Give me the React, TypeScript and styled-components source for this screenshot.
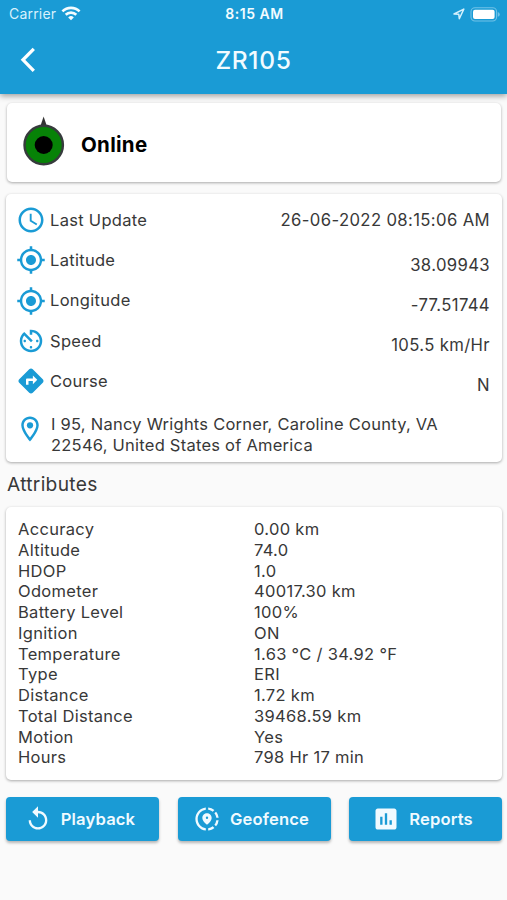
import React from "react";
import styled, { createGlobalStyle } from "styled-components";
import {
  MdAccessTime,
  MdGpsFixed,
  MdAvTimer,
  MdDirections,
  MdOutlineLocationOn,
  MdReplay,
  MdShareLocation,
  MdAssessment,
} from "react-icons/md";

const blue = "#1a9bd5";

const GlobalStyle = createGlobalStyle`
  * { box-sizing: border-box; }
  body {
    margin: 0;
    background: #fafafa;
    color: #383838;
    font-family: Inter, "Liberation Sans", sans-serif;
    font-size: 16.5px;
    line-height: 20.76px;
    letter-spacing: 0.3px;
    white-space: nowrap;
  }
  svg { display: block; flex: none; }
`;

const Screen = styled.main`
  width: 507px;
  height: 900px;
  display: flex;
  flex-direction: column;
  overflow: hidden;
`;

const Header = styled.header`
  height: 94px;
  flex: none;
  background: ${blue};
  color: #f2fbff;
  box-shadow: 0 2px 6px rgba(0, 0, 0, 0.38);
`;

const StatusBar = styled.div`
  height: 27px;
  padding: 1px 7px 0 9px;
  display: grid;
  grid-template-columns: 1fr auto 1fr;
  align-items: center;
  font-size: 14px;
  letter-spacing: 0.2px;
`;

const StatusGroup = styled.div<{ $end?: boolean }>`
  display: flex;
  align-items: center;
  gap: 5px;
  justify-content: ${({ $end }) => ($end ? "flex-end" : "flex-start")};
  color: #d8f1fc;
`;

const Clock = styled.span`
  font-size: 14px;
  font-weight: 600;
  letter-spacing: 0.5px;
`;

const TitleBar = styled.div`
  height: 66px;
  padding: 0 20px;
  display: grid;
  grid-template-columns: 1fr auto 1fr;
  align-items: center;
`;

const Title = styled.h1`
  margin: 0;
  font-size: 24.5px;
  line-height: 30px;
  font-weight: 500;
  letter-spacing: 0.7px;
`;

const Card = styled.section`
  flex: none;
  margin: 0 5px 0 6px;
  background: #fff;
  border-radius: 5px;
  box-shadow: 0 1px 3px rgba(0, 0, 0, 0.33);
`;

const OnlineCard = styled(Card)`
  height: 79px;
  margin: 9px 6px 0 7px;
  padding: 5px 16px 0;
  display: flex;
  align-items: center;
  gap: 16px;
`;

const OnlineLabel = styled.strong`
  color: #000;
  font-size: 20.5px;
  font-weight: 650;
  letter-spacing: 0.3px;
`;

const DetailsCard = styled(Card)`
  height: 268px;
  margin-top: 12px;
  padding: 6px 12px 0 9.5px;
`;

const DetailRow = styled.div`
  height: 40.3px;
  display: flex;
  align-items: center;
  color: ${blue};
`;

const DetailLabel = styled.span`
  margin-left: 4.5px;
  color: #383838;
`;

const DetailValue = styled.span<{ $low?: boolean }>`
  margin-left: auto;
  padding-top: ${({ $low }) => ($low ? "9px" : "0")};
  color: #383838;
  font-size: 16.7px;
  letter-spacing: 0.36px;
`;

const AddressRow = styled.div`
  padding: 12.5px 0 0 0;
  display: flex;
  align-items: flex-start;
  gap: 6.5px;
  color: ${blue};
  letter-spacing: 0.24px;

  svg { margin-left: -1px; }
`;

const Address = styled.p`
  margin: 0;
  color: #383838;
`;

const SectionTitle = styled.h2`
  margin: 11px 0 0 7px;
  font-size: 19.2px;
  line-height: 22px;
  font-weight: 400;
  letter-spacing: 0.3px;
`;

const AttributesCard = styled(Card)`
  height: 273px;
  margin-top: 12px;
  padding: 12px 12px 0;
`;

const AttributeRow = styled.div`
  display: grid;
  grid-template-columns: 236px 1fr;
`;

const Actions = styled.div`
  margin: 17px 5px 0 6px;
  display: flex;
  justify-content: space-between;
`;

const ActionButton = styled.button`
  width: 153px;
  height: 44px;
  padding: 0 6px 0 0;
  display: flex;
  align-items: center;
  justify-content: center;
  gap: 9px;
  border: 0;
  border-radius: 4px;
  background: ${blue};
  box-shadow: 0 2px 3px rgba(0, 0, 0, 0.28);
  color: #f0faff;
  font: 600 16.6px/22px Inter, sans-serif;
  letter-spacing: 0.15px;
`;

const WifiIcon = () => (
  <svg width="20" height="15" viewBox="0 0 20 15" fill="none" stroke="#f4fcff" strokeWidth="2.6">
    <path d="M1.4 5.4a12.3 12.3 0 0 1 17.2 0M4.7 8.8a7.6 7.6 0 0 1 10.6 0" />
    <path d="M7.2 11.4a4 4 0 0 1 5.6 0L10 14.3z" fill="#f4fcff" stroke="none" />
  </svg>
);

const LocationArrow = () => (
  <svg width="12" height="12" viewBox="0 0 12 12" fill="none" stroke="#d4f0fc" strokeWidth="1.5" strokeLinejoin="round">
    <path d="M1 6 10.8 1.1 6.3 10.7 5.8 6.3z" />
  </svg>
);

const BatteryIcon = () => (
  <svg width="30" height="15" viewBox="0 0 30 15">
    <rect x="1" y=".8" width="25.6" height="13.2" rx="4" fill="none" stroke="#71c2e7" strokeWidth="1.1" />
    <rect x="3" y="2.8" width="21.6" height="9.2" rx="2" fill="#fff" />
    <path d="M27.8 5q2 .8 2 2.4t-2 2.4z" fill="#71c2e7" />
  </svg>
);

const BackIcon = () => (
  <svg width="16" height="26" viewBox="0 0 16 26" fill="none" stroke="#fff" strokeWidth="3.3">
    <path d="M13.8 1.8 3 12.8l10.8 11" />
  </svg>
);

const MarkerDrawing = styled.svg`
  margin-bottom: 9px;
`;

const VehicleMarker = () => (
  <MarkerDrawing width="42" height="50" viewBox="0 0 42 50">
    <path d="M17.1 11 20.6 .5 24.2 11z" fill="#333" />
    <circle cx="20.7" cy="29" r="19.2" fill="#078207" stroke="#373b3d" strokeWidth="2.4" />
    <circle cx="20.7" cy="29" r="9" fill="#000" />
  </MarkerDrawing>
);

const details = [
  { label: "Last Update", value: "26-06-2022 08:15:06 AM", Icon: MdAccessTime },
  { label: "Latitude", value: "38.09943", Icon: MdGpsFixed },
  { label: "Longitude", value: "-77.51744", Icon: MdGpsFixed },
  { label: "Speed", value: "105.5 km/Hr", Icon: MdAvTimer },
  { label: "Course", value: "N", Icon: MdDirections },
];

const attributes = [
  ["Accuracy", "0.00 km"],
  ["Altitude", "74.0"],
  ["HDOP", "1.0"],
  ["Odometer", "40017.30 km"],
  ["Battery Level", "100%"],
  ["Ignition", "ON"],
  ["Temperature", "1.63 °C / 34.92 °F"],
  ["Type", "ERI"],
  ["Distance", "1.72 km"],
  ["Total Distance", "39468.59 km"],
  ["Motion", "Yes"],
  ["Hours", "798 Hr 17 min"],
];

export default function App() {
  return (
    <>
      <GlobalStyle />
      <Screen>
        <Header>
          <StatusBar>
            <StatusGroup>Carrier <WifiIcon /></StatusGroup>
            <Clock>8:15 AM</Clock>
            <StatusGroup $end><LocationArrow /><BatteryIcon /></StatusGroup>
          </StatusBar>
          <TitleBar>
            <BackIcon />
            <Title>ZR105</Title>
          </TitleBar>
        </Header>

        <OnlineCard>
          <VehicleMarker />
          <OnlineLabel>Online</OnlineLabel>
        </OnlineCard>

        <DetailsCard>
          {details.map(({ label, value, Icon }, index) => (
            <DetailRow key={label}>
              <Icon size={30} />
              <DetailLabel>{label}</DetailLabel>
              <DetailValue $low={index > 0}>{value}</DetailValue>
            </DetailRow>
          ))}
          <AddressRow>
            <MdOutlineLocationOn size={30} />
            <Address>
              I 95, Nancy Wrights Corner, Caroline County, VA
              <br />
              22546, United States of America
            </Address>
          </AddressRow>
        </DetailsCard>

        <SectionTitle>Attributes</SectionTitle>
        <AttributesCard>
          {attributes.map(([name, value]) => (
            <AttributeRow key={name}>
              <span>{name}</span>
              <span>{value}</span>
            </AttributeRow>
          ))}
        </AttributesCard>

        <Actions>
          <ActionButton><MdReplay size={28} />Playback</ActionButton>
          <ActionButton><MdShareLocation size={28} />Geofence</ActionButton>
          <ActionButton><MdAssessment size={28} />Reports</ActionButton>
        </Actions>
      </Screen>
    </>
  );
}
